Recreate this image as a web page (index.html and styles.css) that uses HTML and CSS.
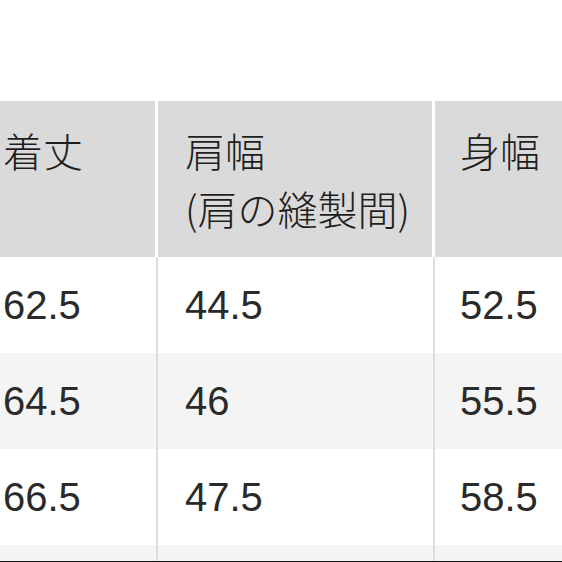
FILE: index.html
```html
<!DOCTYPE html>
<html lang="ja">
<head>
<meta charset="utf-8">
<title>サイズ表</title>
<link rel="stylesheet" href="styles.css">
</head>
<body>
<div class="page">
  <table class="size-table">
    <colgroup>
      <col class="c1">
      <col class="c2">
      <col class="c3">
    </colgroup>
    <thead>
      <tr>
        <th class="first">着丈</th>
        <th class="second">肩幅<br>(肩の縫製間)</th>
        <th class="third">身幅</th>
      </tr>
    </thead>
    <tbody>
      <tr><td class="first">62.5</td><td class="second">44.5</td><td class="third">52.5</td></tr>
      <tr class="alt"><td class="first">64.5</td><td class="second">46</td><td class="third">55.5</td></tr>
      <tr><td class="first">66.5</td><td class="second">47.5</td><td class="third">58.5</td></tr>
      <tr class="alt"><td class="first"></td><td class="second"></td><td class="third"></td></tr>
    </tbody>
  </table>
</div>
</body>
</html>
```

FILE: styles.css
```css
html, body {
  margin: 0;
  padding: 0;
  background: #ffffff;
}

.page {
  box-sizing: border-box;
  width: 562px;
  height: 562px;
  padding-top: 101px;
  overflow: hidden;
  border-bottom: 1px solid #111111;
}

.size-table {
  width: 562px;
  table-layout: fixed;
  border-collapse: separate;
  border-spacing: 0;
  font-family: "Liberation Sans", "Noto Sans CJK JP", sans-serif;
  font-size: 40px;
  color: #2a2a2a;
}

.c1 { width: 158px; }
.c2 { width: 277px; }
.c3 { width: 127px; }

.size-table th {
  box-sizing: border-box;
  height: 156px;
  background: #dadada;
  font-family: "Noto Sans CJK JP", sans-serif;
  font-weight: 300;
  color: #1e1e1e;
  text-align: left;
  vertical-align: top;
  line-height: 58px;
  padding-top: 20px;
  padding-bottom: 0;
  border-right: 3px solid #ffffff;
  white-space: nowrap;
}

.size-table td {
  box-sizing: border-box;
  height: 96px;
  vertical-align: middle;
  text-align: left;
  line-height: 40px;
  padding-top: 0;
  padding-bottom: 0;
  border-right: 2px solid #dedede;
  background: #ffffff;
}

.size-table tr.alt td {
  background: #f4f4f4;
}

.size-table .first { padding-left: 3px; }
.size-table .second { padding-left: 27px; }
.size-table .third { padding-left: 25px; border-right: 0; }
```
